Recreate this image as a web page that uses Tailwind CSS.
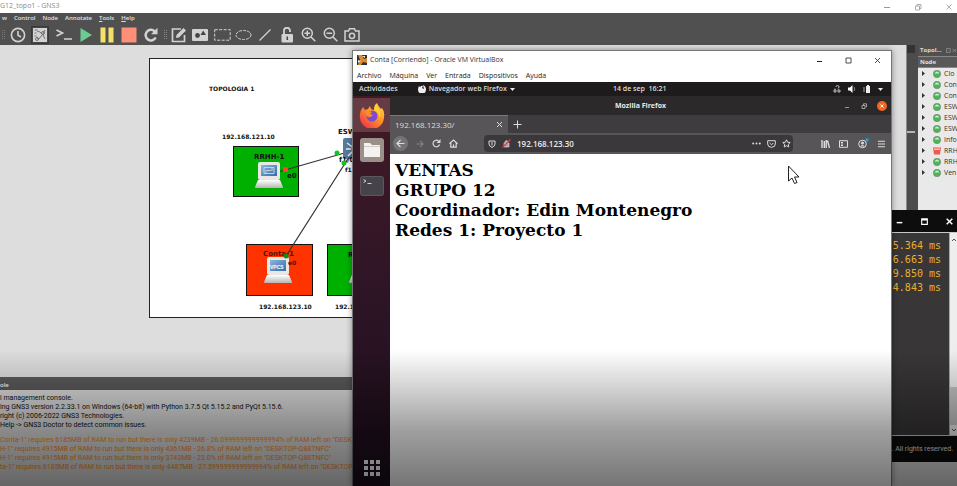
<!DOCTYPE html>
<html lang="es">
<head>
<meta charset="utf-8">
<title>G12_topo1 - GNS3</title>
<script src="https://cdn.jsdelivr.net/npm/@tailwindcss/browser@4"></script>
</head>
<body class="relative flex h-screen flex-col overflow-hidden bg-[#dedddd] font-['Open_Sans',sans-serif] text-[7px] text-black">

<!-- GNS3 main window -->
<header class="flex h-[13px] shrink-0 items-center bg-white text-[#8a8a8a]">
  <h1>G12_topo1 - GNS3</h1>
  <div class="ml-auto mr-1 flex w-[70px] justify-between">
    <button aria-label="Minimizar"><svg class="size-2" viewBox="0 0 8 8" fill="none" stroke="#999"><path d="M1 4.500h6"/></svg></button>
    <button aria-label="Restaurar"><svg class="size-2" viewBox="0 0 8 8" fill="none" stroke="#999" stroke-width=".8"><path d="M1.500 3h4v4h-4zM3 3V1.500h4v4H5.500"/></svg></button>
    <button aria-label="Cerrar"><svg class="size-2" viewBox="0 0 8 8" fill="none" stroke="#999" stroke-width=".8"><path d="M1.500 1.500l5 5M6.500 1.500l-5 5"/></svg></button>
  </div>
</header>

<nav class="flex h-[11px] shrink-0 items-center gap-[7px] bg-[#515051] pl-[2px] text-[6px] font-semibold text-[#e0e0e0]">
  <a href="#">w</a><a href="#">Control</a><a href="#">Node</a><a href="#">Annotate</a><a href="#"><u>T</u>ools</a><a href="#"><u>H</u>elp</a>
</nav>

<div class="flex h-[21px] shrink-0 items-center bg-[#515051] text-[#d2d2d2]">
  <svg class="h-3 w-[6px]" viewBox="0 0 6 12" fill="none" stroke="#777" stroke-dasharray="1 1"><path d="M2.500 1v10M4.500 1v10"/></svg>
  <div class="mr-1 flex gap-1 pl-[3px]">
    <button class="grid size-[18px] place-items-center" aria-label="Snapshots"><svg class="size-4" viewBox="0 0 16 16" fill="none" stroke="currentColor" stroke-width="1.600"><circle cx="8" cy="8" r="6.600"/><path d="M8 4v4.300l3 1.700"/></svg></button>
    <button class="grid size-[18px] place-items-center border border-[#383838] bg-[#484748]" aria-label="Mostrar interfaces"><svg class="size-[14px]" viewBox="0 0 14 14"><path fill="currentColor" d="M0 0h14v14H0z"/><g fill="none" stroke="#6a696a" stroke-width=".9"><path d="M1.500 2h3M1.500 5h2M1.500 8h2M5 12l5-6M4 3l3 1 2 2M10 6l2-4M10 7l2 4M4 9l1 2"/><circle cx="10" cy="5" r="1.500"/><circle cx="4" cy="11" r="1.500"/></g></svg></button>
  </div>
  <div class="grid w-[109px] grid-cols-5 place-items-center">
    <button aria-label="Consola"><svg class="size-4" viewBox="0 0 16 16" fill="none" stroke="currentColor" stroke-width="1.700"><path d="M.5 3l6 3-6 3M8 12h8"/></svg></button>
    <button aria-label="Iniciar"><svg class="size-[14px]" viewBox="0 0 14 14"><path d="M1.500 0L13 7 1.500 14z" fill="#6ccb91"/></svg></button>
    <button aria-label="Pausar"><svg class="size-4" viewBox="0 0 16 16" fill="#f3e16b"><path d="M1.500.5h5v15h-5zM9.500.5h5v15h-5z"/></svg></button>
    <button aria-label="Detener"><svg class="size-4" viewBox="0 0 16 16"><path d="M.5.5h15v15H.5z" fill="#ff8f78"/></svg></button>
    <button aria-label="Recargar"><svg class="size-4" viewBox="0 0 16 16"><path d="M12.700 10.500A5.300 5.300 0 1 1 11.500 4.200" fill="none" stroke="currentColor" stroke-width="2.500"/><path d="M14.500.8v6.500H8z" fill="currentColor"/></svg></button>
  </div>
  <svg class="h-3 w-[6px]" viewBox="0 0 6 12" fill="none" stroke="#888" stroke-dasharray="1 1"><path d="M2.500 1v10M4.500 1v10"/></svg>
  <div class="grid w-[195px] grid-cols-9 place-items-center">
    <button aria-label="Nota"><svg class="size-4" viewBox="0 0 16 16" fill="none" stroke="currentColor" stroke-width="1.700"><path d="M10 2H1.500v12.500h12V8"/><path d="M5 11l.5-3L12.500 1l2.500 2.500-7 7z" fill="currentColor" stroke="none"/></svg></button>
    <button aria-label="Imagen"><svg class="size-4" viewBox="0 0 16 16"><rect y="2" width="16" height="12" rx="1" fill="currentColor"/><circle cx="5.500" cy="8.500" r="2.400" fill="#444"/><path d="M8.500 8l2.700-4.500L14 8z" fill="#444"/></svg></button>
    <button aria-label="Rectángulo"><svg class="h-3 w-[17px]" viewBox="0 0 17 12" fill="none" stroke="currentColor" stroke-dasharray="3 1.500"><rect x=".7" y=".7" width="15.500" height="10.500"/></svg></button>
    <button aria-label="Elipse"><svg class="h-3 w-[17px]" viewBox="0 0 17 12" fill="none" stroke="currentColor" stroke-dasharray="3 1"><ellipse cx="8.500" cy="6" rx="7.500" ry="4.500"/></svg></button>
    <button aria-label="Línea"><svg class="size-3" viewBox="0 0 12 12" stroke="currentColor" stroke-width="1.200"><path d="M.5 11.500l11-11"/></svg></button>
    <button aria-label="Bloquear"><svg class="size-4" viewBox="0 0 16 16"><path d="M5 8V4a3 3 0 0 1 6-.5V5" fill="none" stroke="currentColor" stroke-width="1.800"/><rect x="2.500" y="7" width="11.500" height="8.500" rx="1" fill="currentColor"/><path d="M8.300 9.500v3.500" stroke="#444" stroke-width="1.500"/></svg></button>
    <button aria-label="Acercar"><svg class="size-[15px]" viewBox="0 0 15 15" fill="none" stroke="currentColor" stroke-width="1.500"><circle cx="6.300" cy="6.300" r="5"/><path d="M10 10l4.300 4.300M3.500 6.300h5.600M6.300 3.500v5.600"/></svg></button>
    <button aria-label="Alejar"><svg class="size-[15px]" viewBox="0 0 15 15" fill="none" stroke="currentColor" stroke-width="1.500"><circle cx="6.300" cy="6.300" r="5"/><path d="M10 10l4.300 4.300M3.500 6.300h5.600"/></svg></button>
    <button aria-label="Captura"><svg class="size-4" viewBox="0 0 16 16" fill="none" stroke="currentColor" stroke-width="1.500"><path d="M1 4h3.500l1-2.200h5l1 2.200H15v10H1z"/><circle cx="8" cy="8.800" r="2.600"/></svg></button>
  </div>
</div>

<main class="flex min-h-0 flex-1">
  <section class="min-w-0 flex-1 overflow-hidden" aria-label="Topología">
    <svg class="block h-[332px] w-[906px]" viewBox="0 45 906 332" font-family="DejaVu Sans, sans-serif" font-size="6" font-weight="bold" fill="#111">
      <defs>
        <linearGradient id="pcbase" x2="0" y2="1"><stop stop-color="#fff"/><stop offset="1" stop-color="#b5b5b5"/></linearGradient>
        <linearGradient id="pcscreen" x2="1" y2="1"><stop stop-color="#8eb6de"/><stop offset="1" stop-color="#356ba6"/></linearGradient>
        <g id="pc"><path d="M3 18h22l3 7q0 1-1 1H1q-1 0-1-1z" fill="url(#pcbase)"/><rect x="3" width="22" height="18" rx="2" fill="#e8e8e4"/><rect x="6" y="3" width="16" height="11" fill="url(#pcscreen)"/></g>
      </defs>
      <rect x="149.500" y="58.500" width="600" height="259" fill="#fff" stroke="#222"/>
      <text x="209" y="91">TOPOLOGIA 1</text>
      <text x="222" y="139">192.168.121.10</text>
      <rect x="233.500" y="146.500" width="65" height="50" fill="#00b000" stroke="#111"/>
      <rect x="246.500" y="244.500" width="66" height="51" fill="#ff3300" stroke="#111"/>
      <rect x="327.500" y="244.500" width="66" height="51" fill="#00b000" stroke="#111"/>
      <g stroke="#333" stroke-width="1.200"><path d="M278 172l70-20M286 256l65-102"/></g>
      <g><rect x="343" y="138" width="24" height="21" rx="2" fill="#567a9c"/><path d="M355 149l-8-6M355 149l-9 0M355 149l-7 7M355 149v-8" stroke="#e7eef4" stroke-width="1.500"/><circle cx="354" cy="149" r="3" fill="#e46b55"/></g>
      <text x="338" y="134" font-size="7">ESW1</text><text x="339" y="162" font-size="7">f1/0</text><text x="345" y="172">f1/1</text>
      <circle cx="337" cy="153" r="2.500" fill="#12c51d"/><circle cx="344" cy="163" r="2.500" fill="#12c51d"/>
      <use href="#pc" x="255" y="162"/>
      <path d="M264 167.500h10v6h-10zM267 170.500h4M266 173v-3M272 168v3" fill="none" stroke="#c5dbf0" stroke-width=".9"/>
      <text x="254" y="159" font-size="7">RRHH-1</text><rect x="283" y="167" width="5" height="5" rx="1" fill="#ff4326"/><text x="287" y="178" font-size="7">e0</text>
      <use href="#pc" x="264" y="257"/>
      <text x="263" y="256" font-size="7" fill="#5c1008">Conta-1</text><text x="288" y="265" fill="#5c1008">e0</text>
      <text x="270" y="269" fill="#fff" font-family="Liberation Sans, sans-serif" font-size="5">VPCS</text>
      <circle cx="286" cy="256" r="2.500" fill="#128c1d"/>
      <text x="348" y="257" font-size="7">R</text><use href="#pc" x="349" y="257"/>
      <text x="259" y="309">192.168.123.10</text><text x="335" y="309">192.168.122.10</text>
    </svg>
  </section>
  <div class="flex w-[9px] flex-col border-l border-[#8c8c8c] bg-[#4d4c4d]"><span class="h-2 bg-[#333]"></span><span class="mt-[78px] h-[2px] bg-[#b5b5b5]"></span></div>
  <aside class="w-[42px] overflow-hidden border-l-[3px] border-[#4d4c4d] bg-[#e9e9e9]">
    <h2 class="flex h-[11px] items-center gap-1 bg-[#515051] pl-[2px] text-[6px] font-bold text-[#d8d8d8]">Topol... <svg class="h-[5px] w-3" viewBox="0 0 12 5" fill="none" stroke="#888"><path d="M.5.5h4v4h-4zM7 1l4 3M11 1L7 4"/></svg></h2>
    <h3 class="flex h-3 items-center border-y border-[#888] bg-[#5a595a] pl-[2px] text-[6px] font-bold text-[#e0e0e0]">Node</h3>
    <ul id="nodes" class="text-[7px] leading-[11px] text-[#333]"></ul>
  </aside>
</main>

<section class="h-[109px] shrink-0" aria-label="Consola">
  <h2 class="flex h-[13px] items-center bg-[#5b595b] pt-1 text-[6px] font-semibold text-white">ole</h2>
  <div class="h-24 bg-[#dcdcdc] pt-1 font-[Roboto,sans-serif] text-[7px] leading-[9px] whitespace-nowrap text-[#111]">
    <p>i management console.</p>
    <p>ing GNS3 version 2.2.33.1 on Windows (64-bit) with Python 3.7.5 Qt 5.15.2 and PyQt 5.15.6.</p>
    <p>right (c) 2006-2022 GNS3 Technologies.</p>
    <p>Help -&gt; GNS3 Doctor to detect common issues.</p>
    <div class="pt-[6px] text-[#f08a1c]">
      <p>Conta-1" requires 6185MB of RAM to run but there is only 4239MB - 26.099999999999994% of RAM left on "DESKTOP-Q88TNFC"</p>
      <p>H-1" requires 4915MB of RAM to run but there is only 4361MB - 26.8% of RAM left on "DESKTOP-Q88TNFC"</p>
      <p>H-1" requires 4915MB of RAM to run but there is only 3743MB - 23.0% of RAM left on "DESKTOP-Q88TNFC"</p>
      <p>ta-1" requires 6185MB of RAM to run but there is only 4487MB - 27.599999999999994% of RAM left on "DESKTOP-Q88TNFC"</p>
    </div>
  </div>
</section>

<!-- Terminal window -->
<section class="absolute top-[210px] right-0 flex h-[252px] w-[90px] flex-col bg-[#0d0d0d]" aria-label="Terminal">
  <div class="flex h-[22px] items-center justify-end gap-4 pr-[3px] text-white">
    <button aria-label="Minimizar"><svg class="size-[9px]" viewBox="0 0 8 8" stroke="currentColor" stroke-width="1.300"><path d="M1.500 5h5"/></svg></button>
    <button aria-label="Maximizar"><svg class="size-[9px]" viewBox="0 0 8 8" fill="none" stroke="currentColor"><path d="M1.500 1.500h5v5h-5zM1.500 2.500h5"/></svg></button>
    <button aria-label="Cerrar"><svg class="size-[9px]" viewBox="0 0 8 8" stroke="currentColor" stroke-width="1.300"><path d="M1.500 1.500l5 5M6.500 1.500l-5 5"/></svg></button>
  </div>
  <div class="flex flex-1 border-y border-[#c8c8c8] bg-[#383637]">
    <pre class="flex-1 border-r border-[#aaa] pt-[6px] pr-2 text-right font-['DejaVu_Sans_Mono',monospace] text-[10px] leading-[14px] text-[#eab030]">5.364 ms
6.663 ms
9.850 ms
4.843 ms</pre>
    <div class="flex w-[7px] flex-col items-center bg-[#eeeeee]">
      <svg class="mt-1 size-[6px]" viewBox="0 0 6 6" fill="none" stroke="#555"><path d="M1 4l2-2 2 2"/></svg>
      <span class="mt-auto h-[38px] w-full bg-[#c4c4c4]"></span>
      <svg class="my-[2px] size-[6px]" viewBox="0 0 6 6" fill="none" stroke="#555"><path d="M1 2l2 2 2-2"/></svg>
    </div>
  </div>
  <p class="flex h-[26px] items-center justify-end pr-1 font-[Roboto,sans-serif] text-[7px] whitespace-nowrap text-[#e0e0e0]">. All rights reserved.</p>
</section>

<!-- VirtualBox window -->
<section class="absolute top-[50px] right-[65px] bottom-0 left-[352px] flex flex-col border border-b-0 border-[#777] bg-white shadow-[0_0_6px_rgba(0,0,0,0.4)]" aria-label="VirtualBox">
  <div class="flex h-[18px] shrink-0 items-center gap-[3px] pl-1 text-[#333]">
    <svg class="size-[10px]" viewBox="0 0 10 10"><path d="M0 0h10v10H0z" fill="#23324a"/><path d="M1 0h4l2 4 3-1v5L6 7 4 10H1l2-5z" fill="#e0872d"/><path d="M5 1h3v2zM1 5l3 1-3 2z" fill="#f7e7c8"/></svg>
    <h2>Conta [Corriendo] - Oracle VM VirtualBox</h2>
    <div class="mr-[9px] ml-auto flex gap-5 text-[#222]">
      <button aria-label="Minimizar"><svg class="size-[9px]" viewBox="0 0 9 9" stroke="currentColor"><path d="M2 5.500h5"/></svg></button>
      <button aria-label="Maximizar"><svg class="size-[9px]" viewBox="0 0 9 9" fill="none" stroke="currentColor" stroke-width=".8"><path d="M2 2h5v5H2z"/></svg></button>
      <button aria-label="Cerrar"><svg class="size-[9px]" viewBox="0 0 9 9" stroke="currentColor" stroke-width=".8"><path d="M2 2l5 5M7 2L2 7"/></svg></button>
    </div>
  </div>
  <nav class="flex h-[13px] shrink-0 items-center gap-2 pt-px pl-1 text-[#222]">
    <a href="#">Archivo</a><a href="#">Máquina</a><a href="#">Ver</a><a href="#">Entrada</a><a href="#">Dispositivos</a><a href="#">Ayuda</a>
  </nav>

  <!-- Ubuntu top bar -->
  <div class="flex h-[14px] shrink-0 items-center bg-[#1d1b1c] pl-[6px] text-[7px] font-semibold text-[#dcdcdc]">
    <div class="flex w-[254px] items-center gap-5">
      <button>Actividades</button>
      <button class="flex items-center gap-[3px]"><svg class="size-2" viewBox="0 0 8 8"><path d="M1 1l1 1q2-2 3-1L4 3l2 1-1-4q3 1 3 4.500a4 4 0 0 1-8 0Q0 3 1 1z" fill="#eee"/></svg>Navegador web Firefox <svg class="h-[3px] w-[5px]" viewBox="0 0 5 3"><path d="M0 0h5L2.500 3z" fill="#eee"/></svg></button>
    </div>
    <time class="whitespace-pre">14 de sep  16:21</time>
    <div class="mr-2 ml-auto flex items-center gap-[7px]">
      <svg class="size-2" viewBox="0 0 8 8" fill="none" stroke="#ccc" stroke-width=".9"><path d="M3 2q0-1.500 1.500-1.500T6 2q0 1-1.500 2M1 5h2v2H1zM5 5h2v2H5zM2 5V3.500"/></svg>
      <svg class="size-2" viewBox="0 0 8 8"><path d="M0 2.500h2L4.500 0v8L2 5.500H0z" fill="#fff"/><path d="M6 2q1.500 2 0 4" fill="none" stroke="#888"/></svg>
      <svg class="size-2" viewBox="0 0 8 8"><path d="M3 1h1V0h2v1h1v7H3z" fill="#eee"/><path d="M1 2v5" stroke="#aaa"/></svg>
      <svg class="h-[3px] w-[5px]" viewBox="0 0 5 3"><path d="M0 0h5L2.500 3z" fill="#eee"/></svg>
    </div>
  </div>

  <div class="flex min-h-0 flex-1">
    <!-- Launcher -->
    <aside class="flex w-[37px] shrink-0 flex-col items-center bg-linear-to-b from-[#421a26] via-[#2e1526] to-[#1c0d1b] pb-2">
      <button class="mt-[2px] grid h-[34px] w-full place-items-center bg-[#663b44]" aria-label="Firefox">
        <svg class="size-[26px]" viewBox="0 0 26 26"><defs><linearGradient id="fx" x1="1" x2=".2" y2="1"><stop stop-color="#ffe24a"/><stop offset=".45" stop-color="#ff9a26"/><stop offset="1" stop-color="#f0304e"/></linearGradient></defs><path d="M4 5l2 3 3-1 2-3 1 3 3 1q0-5 3-7 1 3 4 6l1-1q3 4 2 9A12 12 0 0 1 1 15Q0 10 4 5z" fill="url(#fx)"/><circle cx="13" cy="14" r="5.500" fill="#7b4bd0"/><path d="M7 10q3-2 6 0l-2 2 3 1q-1 2-4 2-3 0-3-5z" fill="#ff8a22"/><path d="M15 8q6 2 5 8 3-4 0-9-2-3-3-5-2 3-2 6z" fill="#ffcf3a"/></svg>
      </button>
      <button class="mt-[6px]" aria-label="Archivos"><svg class="size-6" viewBox="0 0 24 24"><rect width="24" height="24" rx="3" fill="#9b8f89"/><path d="M4 5h6l2 2h8v12H4z" fill="#f4f2f0"/><path d="M4 8.500h16" stroke="#d0cac6"/></svg></button>
      <button class="mt-[14px]" aria-label="Terminal"><svg class="h-5 w-6" viewBox="0 0 24 20"><rect x=".5" y=".5" width="23" height="19" rx="2" fill="#47434a" stroke="#5c575e"/><path d="M3.500 3.500l2.500 1.500-2.500 1.500M7.500 7.500h4" fill="none" stroke="#d0d0d0"/></svg></button>
      <button class="mt-auto" aria-label="Mostrar aplicaciones"><svg class="size-5" viewBox="0 0 20 20" fill="#fff"><path d="M2 2h4v4H2zM8 2h4v4H8zM14 2h4v4h-4zM2 8h4v4H2zM8 8h4v4H8zM14 8h4v4h-4zM2 14h4v4H2zM8 14h4v4H8zM14 14h4v4h-4z"/></svg></button>
    </aside>

    <!-- Firefox -->
    <div class="flex min-w-0 flex-1 flex-col">
      <div class="grid h-[19px] shrink-0 grid-cols-[1fr_auto_1fr] items-center bg-[#2b292a] pt-px text-[7px] font-bold text-[#e8e8e8]">
        <span></span><h3>Mozilla Firefox</h3>
        <div class="mr-1 flex items-center justify-end gap-[9px]">
          <button aria-label="Minimizar"><svg class="size-2" viewBox="0 0 8 8" stroke="#999"><path d="M2 5.500h4"/></svg></button>
          <button aria-label="Restaurar"><svg class="size-2" viewBox="0 0 8 8" fill="none" stroke="#bbb" stroke-width=".8"><path d="M2 3.500h3v3H2zM3.500 3V1.800h3v3H5.500"/></svg></button>
          <button aria-label="Cerrar"><svg class="size-[10px]" viewBox="0 0 10 10"><circle cx="5" cy="5" r="5" fill="#f26522"/><path d="M3.500 3.500l3 3M6.500 3.500l-3 3" stroke="#fff"/></svg></button>
        </div>
      </div>
      <div class="flex h-[18px] shrink-0 items-stretch bg-[#3e3c3e] text-[#dddddd]">
        <div class="flex w-[118px] items-center justify-between border-t border-[#c8622c] bg-[#575557] pr-[5px] pl-[5px] text-[8px]"><span>192.168.123.30/</span><button aria-label="Cerrar pestaña"><svg class="size-[7px]" viewBox="0 0 7 7" stroke="currentColor"><path d="M1 1l5 5M6 1L1 6"/></svg></button></div>
        <button class="ml-[5px]" aria-label="Nueva pestaña"><svg class="size-[9px]" viewBox="0 0 9 9" stroke="currentColor"><path d="M4.500.5v8M.5 4.500h8"/></svg></button>
      </div>
      <div class="flex h-[21px] shrink-0 items-center bg-[#575557] text-[#dddddd]">
        <div class="flex w-[94px] items-center gap-2 pl-[3px]">
          <button class="grid size-[15px] place-items-center rounded-full bg-[#757375]" aria-label="Atrás"><svg class="size-[9px]" viewBox="0 0 9 9" fill="none" stroke="currentColor" stroke-width="1.200"><path d="M8.500 4.500H1M4.500 1L1 4.500 4.500 8"/></svg></button>
          <button aria-label="Adelante"><svg class="size-2" viewBox="0 0 9 9" fill="none" stroke="#858385" stroke-width="1.200"><path d="M.5 4.500H8M4.500 1L8 4.500 4.500 8"/></svg></button>
          <button aria-label="Recargar página"><svg class="size-[9px]" viewBox="0 0 9 9"><path d="M7.500 5.500A3.300 3.300 0 1 1 6.500 2" fill="none" stroke="currentColor" stroke-width="1.200"/><path d="M8.500 0v4h-4z" fill="currentColor"/></svg></button>
          <button aria-label="Inicio"><svg class="size-[9px]" viewBox="0 0 9 9" fill="none" stroke="currentColor" stroke-width="1.200"><path d="M.5 4.700L4.500 1l4 3.700M1.800 4v4.200h5.400V4M4.500 8V5.500"/></svg></button>
        </div>
        <div class="flex h-[17px] flex-1 items-center gap-[6px] rounded-sm bg-[#3a383a] pr-[2px] pl-1">
          <svg class="size-2" viewBox="0 0 8 8" fill="none" stroke="currentColor"><path d="M1 1h6v3q0 2-3 3.500Q1 6 1 4zM4 2v3.500"/></svg>
          <svg class="size-[9px]" viewBox="0 0 9 9"><path d="M2 4h5v4H2zM3 4V2.500q1.500-2 3 0V4" fill="#aaa" stroke="#ccc" stroke-width=".7"/><path d="M.5 8.500l8-8" stroke="#e2364e" stroke-width="1.300"/></svg>
          <input class="min-w-0 flex-1 bg-transparent text-[8px] font-semibold text-[#ececec] outline-none" aria-label="Dirección" value="192.168.123.30">
          <svg class="size-[9px]" viewBox="0 0 9 9" fill="currentColor"><circle cx="1.200" cy="4.500" r="1"/><circle cx="4.500" cy="4.500" r="1"/><circle cx="7.800" cy="4.500" r="1"/></svg>
          <svg class="h-2 w-[9px]" viewBox="0 0 9 8" fill="none" stroke="currentColor"><path d="M.7.7h7.600V4a3.800 3.300 0 0 1-7.600 0zM2.700 3l1.800 1.800L6.300 3"/></svg>
          <svg class="size-[9px]" viewBox="0 0 9 9" fill="none" stroke="currentColor"><path d="M4.500.8l1.100 2.400 2.600.3-1.900 1.800.5 2.700-2.300-1.300L2.200 8l.5-2.700L.8 3.500l2.600-.3z"/></svg>
        </div>
        <div class="flex w-[98px] items-center justify-between pr-[6px] pl-[28px]">
          <button aria-label="Biblioteca"><svg class="h-2 w-[9px]" viewBox="0 0 9 8" stroke="currentColor" stroke-width="1.400"><path d="M1 0v8M3.300 1v7M5.200 0v8M6.500.5L8.500 8"/></svg></button>
          <button aria-label="Barra lateral"><svg class="h-2 w-[9px]" viewBox="0 0 9 8" fill="none" stroke="currentColor"><path d="M.5.7h8v6.600h-8zM2 2.500h2M2 4h2M2 5.500h2"/></svg></button>
          <button aria-label="Cuenta"><svg class="size-[11px]" viewBox="0 0 11 11"><circle cx="4.500" cy="6" r="3.800" fill="none" stroke="currentColor"/><circle cx="4.500" cy="5" r="1.500" fill="currentColor"/><path d="M2 8.500q2.500-3 5 0z" fill="currentColor"/><circle cx="9" cy="2" r="1.700" fill="#1ba0f2"/></svg></button>
          <button aria-label="Menú"><svg class="h-2 w-[7px]" viewBox="0 0 7 8" stroke="currentColor" stroke-width="1.100"><path d="M0 1.200h7M0 4h7M0 6.800h7"/></svg></button>
        </div>
      </div>
      <article class="flex-1 bg-white px-[5px] pt-[6px] font-['DejaVu_Serif',serif] text-[17px] leading-[20px] font-bold">
        <p>VENTAS</p><p>GRUPO 12</p><p>Coordinador: Edin Montenegro</p><p>Redes 1: Proyecto 1</p>
      </article>
    </div>
  </div>
</section>

<!-- Mouse pointer -->
<svg class="absolute top-[165px] left-[787px] h-5 w-[14px]" viewBox="0 0 14 20"><path d="M1.500 1v15l3.500-3 2.500 5.500 2.500-1-2.500-5.500h4.500z" fill="#fff" stroke="#222"/></svg>

<!-- Player shade along the lower edge -->
<div class="pointer-events-none absolute inset-x-0 bottom-0 h-[136px] bg-linear-to-b from-transparent via-black/38 via-60% to-black/54"></div>

<script>
  const nodes = [['Clo'], ['Con'], ['Con'], ['ESW'], ['ESW'], ['ESW'], ['Info'], ['RRH', true], ['RRH'], ['Ven']];
  document.getElementById('nodes').innerHTML = nodes.map(([name, off]) =>
    `<li class="flex h-[11px] items-center whitespace-nowrap pl-1">
      <svg class="mr-2 h-[5px] w-[3px] shrink-0" viewBox="0 0 3 5"><path d="M0 0l3 2.500L0 5z" fill="#333"/></svg>
      <svg class="mr-[3px] size-2 shrink-0" viewBox="0 0 8 8">${off
        ? '<path d="M0 .5h8L7 7.500H1z" fill="#ee5a4c"/><path d="M1 1.500h6v1.500H1z" fill="#ffc0b8"/>'
        : '<circle cx="4" cy="4" r="3.700" fill="#4bb556" stroke="#7a857a" stroke-width=".6"/><path d="M1.500 3.500q2.500-4 5 0z" fill="#c9edcc"/>'}</svg>${name}</li>`).join('');
</script>
</body>
</html>
